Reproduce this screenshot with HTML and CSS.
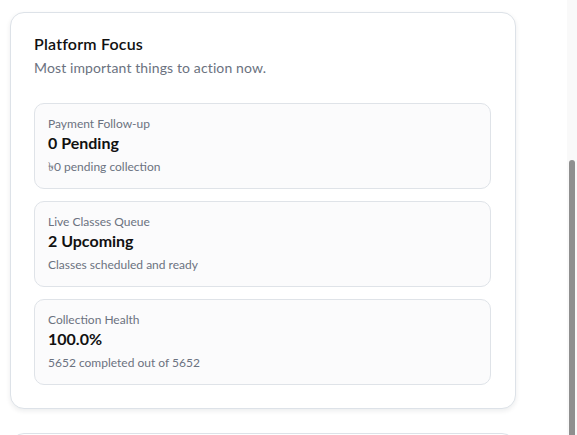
FILE: index.html
```html
<!DOCTYPE html>
<html lang="en">
<head>
<meta charset="utf-8">
<title>Platform Focus</title>
<link rel="stylesheet" href="styles.css">
</head>
<body>
<div class="shell">
  <main class="page">
    <section class="card">
      <h2 class="card-title">Platform Focus</h2>
      <p class="card-sub">Most important things to action now.</p>
      <div class="focus-list">
        <div class="focus-item">
          <div class="focus-label">Payment Follow-up</div>
          <div class="focus-value">0 Pending</div>
          <div class="focus-note">৳0 pending collection</div>
        </div>
        <div class="focus-item">
          <div class="focus-label">Live Classes Queue</div>
          <div class="focus-value">2 Upcoming</div>
          <div class="focus-note">Classes scheduled and ready</div>
        </div>
        <div class="focus-item">
          <div class="focus-label">Collection Health</div>
          <div class="focus-value">100.0%</div>
          <div class="focus-note">5652 completed out of 5652</div>
        </div>
      </div>
    </section>
    <section class="card card-next"></section>
  </main>
  <div class="scrollbar" aria-hidden="true"><div class="scroll-thumb"></div></div>
</div>
</body>
</html>
```

FILE: styles.css
```css
html, body {
  margin: 0;
  padding: 0;
  background: #ffffff;
}
body {
  font-family: "Lato", "Noto Sans", "DejaVu Sans", sans-serif;
  color: #111827;
}
.shell {
  height: 100vh;
  display: flex;
  overflow: hidden;
}
.page {
  flex: 1;
  min-width: 0;
  display: flex;
  flex-direction: column;
  gap: 24px;
  padding: 12px 10px 0;
}
.scrollbar {
  flex: none;
  width: 10px;
  background: #f9f9f9;
}
.scroll-thumb {
  margin: 160px 0 0 2px;
  width: 6px;
  height: 300px;
  background: #8f8f8f;
  border-radius: 3px 3px 0 0;
}
.card {
  flex: none;
  box-sizing: border-box;
  width: 506px;
  background: #ffffff;
  border: 1px solid #dde2e8;
  border-radius: 14px;
  padding: 19px 24px 23px 23px;
  box-shadow: 0 2px 5px rgba(15, 23, 42, 0.08);
}
.card-title {
  margin: 0;
  font-size: 16px;
  line-height: 24px;
  font-weight: 600;
  letter-spacing: 0.2px;
  color: #111111;
}
.card-sub {
  margin: 2px 0 0;
  font-size: 14px;
  line-height: 20px;
  letter-spacing: 0.12px;
  color: #6b7280;
}
.focus-list {
  margin-top: 25px;
  display: flex;
  flex-direction: column;
  gap: 12px;
}
.focus-item {
  box-sizing: border-box;
  height: 86px;
  border: 1px solid #dfe3e8;
  border-radius: 10px;
  background: #fbfbfc;
  padding: 12px 13px;
}
.focus-label {
  font-size: 12px;
  line-height: 16px;
  color: #6b7280;
}
.focus-value {
  font-size: 16px;
  line-height: 22px;
  font-weight: 700;
  color: #111111;
}
.focus-note {
  margin-top: 5px;
  font-size: 12px;
  line-height: 16px;
  color: #6b7280;
}
.card-next {
  height: 120px;
  box-shadow: none;
}
```
